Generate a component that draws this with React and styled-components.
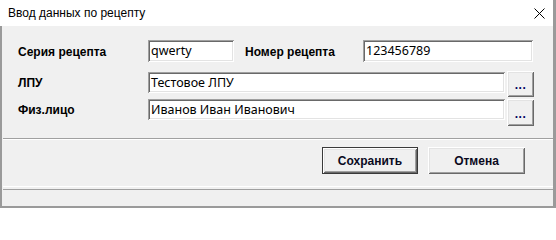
import React from "react";
import styled, { createGlobalStyle, css } from "styled-components";

const Global = createGlobalStyle`
  html, body { margin: 0; padding: 0; background: #ffffff; }
  * { box-sizing: border-box; }
`;

const raised = css`
  box-shadow: inset 1px 1px #ffffff, inset -1px -1px #696969,
    inset 2px 2px #e3e3e3, inset -2px -2px #a0a0a0;
`;

const Window = styled.div`
  width: 556px;
  height: 208px;
  display: flex;
  flex-direction: column;
  border-right: 3px solid #9a9a9a;
  font-family: "Liberation Sans", Arial, sans-serif;
  color: #000;
`;

const TitleBar = styled.div`
  height: 26px;
  flex: none;
  display: flex;
  align-items: center;
  justify-content: space-between;
  background: #ffffff;
  padding: 0 8px 0 8px;
  font-family: "Liberation Sans", Arial, sans-serif;
  font-size: 12px;
`;

const Title = styled.span`
  line-height: 26px;
  padding-bottom: 1px;
`;

const Body = styled.div`
  flex: 1;
  display: flex;
  flex-direction: column;
  background: #f0f0f0;
  border-left: 2px solid #9a9a9a;
  border-bottom: 2px solid #9a9a9a;
`;

const Form = styled.div`
  height: 112px;
  flex: none;
  display: flex;
  flex-direction: column;
  padding: 14px 0 0 16px;
`;

const Row = styled.div`
  display: flex;
  align-items: flex-start;
  margin-top: ${(p) => p.$mt || 0}px;
`;

const Label = styled.div`
  width: ${(p) => p.$w}px;
  flex: none;
  height: ${(p) => p.$h || 22}px;
  line-height: ${(p) => p.$h || 22}px;
  font-weight: bold;
  font-size: 12px;
  padding-top: 1px;
  padding-left: ${(p) => p.$pl || 0}px;
  white-space: nowrap;
`;

const Input = styled.div`
  width: ${(p) => p.$w}px;
  height: ${(p) => p.$h || 22}px;
  flex: none;
  margin-top: ${(p) => p.$mt || 0}px;
  background: #ffffff;
  box-shadow: inset 1px 1px #a0a0a0, inset -1px -1px #ffffff,
    inset 2px 2px #696969, inset -2px -2px #e3e3e3;
  padding-left: 3px;
  font-family: "Noto Sans", sans-serif;
  font-size: 12.5px;
  line-height: ${(p) => p.$h || 22}px;
  white-space: nowrap;
  overflow: hidden;
`;

const DotsButton = styled.div`
  width: 27px;
  height: ${(p) => p.$h || 26}px;
  flex: none;
  margin-left: 2px;
  background: #f0f0f0;
  ${raised};
  display: flex;
  justify-content: center;
  align-items: flex-end;
  padding-bottom: 7px;
  font-weight: bold;
  font-size: 12px;
  line-height: 10px;
  color: #000060;
  letter-spacing: 0.5px;
`;

const Panel = styled.div`
  height: 49px;
  flex: none;
  margin-left: 1px;
  border-top: 1px solid #a0a0a0;
  border-bottom: 1px solid #ffffff;
  box-shadow: inset 0 1px #ffffff;
  display: flex;
  justify-content: flex-end;
  align-items: flex-start;
  gap: 10px;
  padding: 8px 28px 0 0;
`;

const Button = styled.div`
  width: ${(p) => p.$w}px;
  height: 27px;
  display: flex;
  align-items: center;
  justify-content: center;
  background: #f0f0f0;
  font-weight: bold;
  font-size: 12px;
  color: #0a0a1e;
  ${(p) =>
    p.$default
      ? css`
          box-shadow: inset 0 0 0 1px #3a3a3a, inset 2px 2px #ffffff,
            inset -2px -2px #696969, inset 3px 3px #e3e3e3,
            inset -3px -3px #a0a0a0;
        `
      : raised};
`;

const StatusBar = styled.div`
  margin-top: 2px;
  margin-left: 1px;
  flex: 1;
  border-top: 1px solid #a0a0a0;
`;

export default function App() {
  return (
    <>
      <Global />
      <Window>
        <TitleBar>
          <Title>Ввод данных по рецепту</Title>
          <svg width="11" height="11" viewBox="0 0 11 11">
            <path d="M0.5 0.5 L10.5 10.5 M10.5 0.5 L0.5 10.5" stroke="#000" strokeWidth="1" />
          </svg>
        </TitleBar>
        <Body>
          <Form>
            <Row $mt={0}>
              <Label $w={130}>Серия рецепта</Label>
              <Input $w={86}>qwerty</Input>
              <Label $w={129} $pl={11}>Номер рецепта</Label>
              <Input $w={170}>123456789</Input>
            </Row>
            <Row $mt={9}>
              <Label $w={130} $h={23}>ЛПУ</Label>
              <Input $w={357} $h={21} $mt={1}>Тестовое ЛПУ</Input>
              <DotsButton $h={26}>...</DotsButton>
            </Row>
            <Row $mt={2}>
              <Label $w={130} $h={21}>Физ.лицо</Label>
              <Input $w={357} $h={21}>Иванов Иван Иванович</Input>
              <DotsButton $h={27}>...</DotsButton>
            </Row>
          </Form>
          <Panel>
            <Button $w={96} $default>Сохранить</Button>
            <Button $w={97}>Отмена</Button>
          </Panel>
          <StatusBar />
        </Body>
      </Window>
    </>
  );
}
